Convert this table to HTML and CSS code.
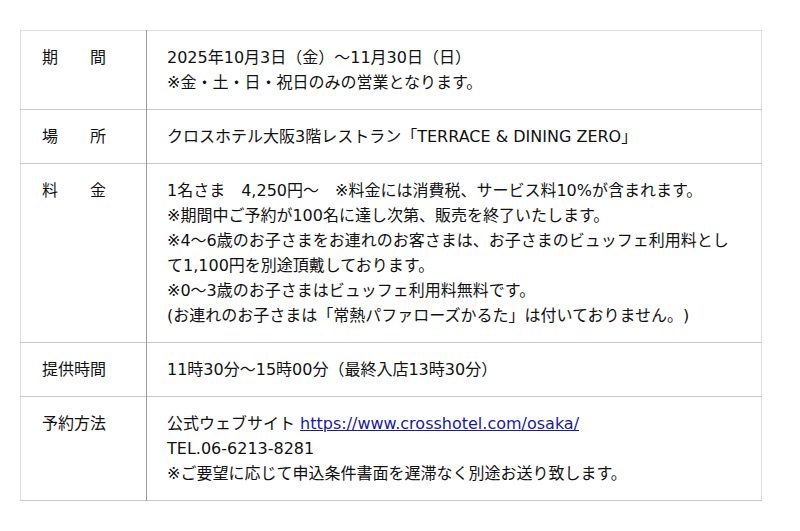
FILE: index.html
```html
<!DOCTYPE html>
<html lang="ja">
<head>
<meta charset="utf-8">
<link rel="stylesheet" href="styles.css">
</head>
<body>
<table class="info">
  <tr>
    <th>期　　間</th>
    <td>2025年10月3日（金）〜11月30日（日）<br>※金・土・日・祝日のみの営業となります。</td>
  </tr>
  <tr>
    <th>場　　所</th>
    <td>クロスホテル大阪3階レストラン「TERRACE &amp; DINING ZERO」</td>
  </tr>
  <tr>
    <th>料　　金</th>
    <td>1名さま　4,250円〜　※料金には消費税、サービス料10%が含まれます。<br>※期間中ご予約が100名に達し次第、販売を終了いたします。<br>※4〜6歳のお子さまをお連れのお客さまは、お子さまのビュッフェ利用料として1,100円を別途頂戴しております。<br>※0〜3歳のお子さまはビュッフェ利用料無料です。<br>(お連れのお子さまは「常熱パファローズかるた」は付いておりません。)</td>
  </tr>
  <tr>
    <th>提供時間</th>
    <td>11時30分〜15時00分（最終入店13時30分）</td>
  </tr>
  <tr>
    <th>予約方法</th>
    <td>公式ウェブサイト <a href="#">https://www.crosshotel.com/osaka/</a><br>TEL.06-6213-8281<br>※ご要望に応じて申込条件書面を遅滞なく別途お送り致します。</td>
  </tr>
</table>
</body>
</html>
```

FILE: styles.css
```css
html, body {
  margin: 0;
  padding: 0;
  background: #fff;
}
body {
  padding: 30px 38px 0 20px;
  font-family: "DejaVu Sans", "Noto Sans CJK JP", sans-serif;
  font-size: 16px;
  line-height: 25px;
  color: #111;
  text-spacing-trim: space-all;
  font-feature-settings: "chws" 0, "halt" 0;
}
.info {
  width: 742px;
  border-collapse: collapse;
  border: 1px solid #dcdcdc;
}
.info tr {
  border-bottom: 1px solid #c8c8c8;
}
.info th {
  width: 84px;
  padding: 14px 20px 14px 21px;
  text-align: left;
  vertical-align: top;
  font-weight: normal;
  border-right: 1px solid #9a9a9a;
  white-space: nowrap;
}
.info td {
  padding: 14px 20px 14px 20px;
  vertical-align: top;
}
.info a {
  color: #1a1a9c;
  text-decoration: underline;
}
```
